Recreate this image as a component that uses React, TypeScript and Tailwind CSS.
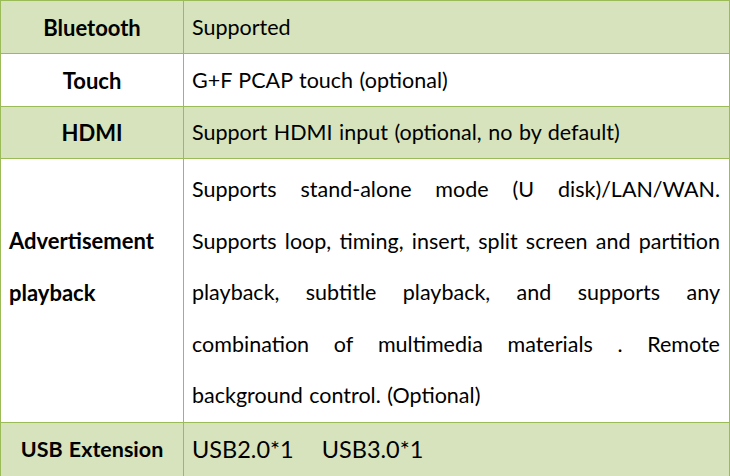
import React from 'react';

const adLines = [
  'Supports stand-alone mode (U disk)/LAN/WAN.',
  'Supports loop, timing, insert, split screen and partition',
  'playback, subtitle playback, and supports any',
  'combination of multimedia materials . Remote',
];

const JustifiedLine: React.FC<{ text: string }> = ({ text }) => (
  <div className="flex justify-between">
    {text.split(' ').map((w, i) => (
      <span key={i}>{w}</span>
    ))}
  </div>
);

const App: React.FC = () => {
  return (
    <div className="w-[730px] h-[476px] bg-white overflow-hidden text-black font-['Lato','Liberation_Sans',sans-serif] text-[21.5px] [word-spacing:1px]">
      <table className="w-[730px] border-collapse table-fixed">
        <colgroup>
          <col className="w-[183px]" />
          <col />
        </colgroup>
        <tbody>
          <tr className="bg-[#d6e3bc] h-[53px]">
            <td className="border border-[#9bbb59] text-center font-bold text-[22px]">Bluetooth</td>
            <td className="border border-[#9bbb59] pl-[8px]">Supported</td>
          </tr>
          <tr className="bg-white h-[53px]">
            <td className="border border-[#9bbb59] text-center font-bold text-[22px]">Touch</td>
            <td className="border border-[#9bbb59] pl-[8px]">G+F PCAP touch (optional)</td>
          </tr>
          <tr className="bg-[#d6e3bc] h-[52px]">
            <td className="border border-[#9bbb59] text-center font-bold text-[22px]">HDMI</td>
            <td className="border border-[#9bbb59] pl-[8px]">Support HDMI input (optional, no by default)</td>
          </tr>
          <tr className="bg-white h-[264px]">
            <td className="border border-[#9bbb59] align-top pt-[56px] pl-[8px] font-bold text-[22px] leading-[51.5px]">
              <div>Advertisement</div>
              <div>playback</div>
            </td>
            <td className="border border-[#9bbb59] align-top pt-[5px] pl-[8px] pr-[9px] leading-[51.5px]">
              {adLines.map((l) => (
                <JustifiedLine key={l} text={l} />
              ))}
              <div>background control. (Optional)</div>
            </td>
          </tr>
          <tr className="bg-[#d6e3bc] h-[54px]">
            <td className="border border-[#9bbb59] text-center font-bold text-[21.5px]">USB Extension</td>
            <td className="border border-[#9bbb59] pl-[8px] text-[23.5px]">
              USB2.0*1<span className="inline-block w-[28px]" />USB3.0*1
            </td>
          </tr>
        </tbody>
      </table>
    </div>
  );
};

export default App;
